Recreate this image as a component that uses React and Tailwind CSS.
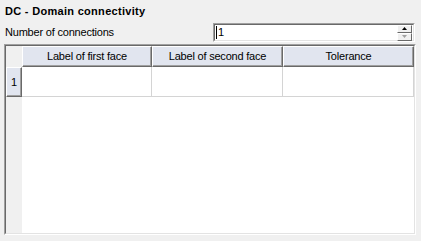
export default function App() {
	const cols = [
		{ label: 'Label of first face', w: 'w-[130px]' },
		{ label: 'Label of second face', w: 'w-[131px]' },
		{ label: 'Tolerance', w: 'w-[131px]' },
	];

	return (
		<div className="h-[241px] w-[421px] overflow-hidden bg-[#f0f0f0] pl-[4px] pt-[4px] font-['Liberation_Sans',Arial,sans-serif] text-[11px] tracking-[-0.2px] text-black">
			<div className="h-[14px] pl-[1px] font-bold leading-[14px] tracking-[0.3px]">DC - Domain connectivity</div>

			<div className="mt-[5px] flex h-[19px] w-[411px] items-center justify-between">
				<span className="pl-[1px]">Number of connections</span>
				<div className="h-[19px] w-[202px] border border-t-[#a0a0a0] border-l-[#a0a0a0] border-b-white border-r-white">
					<div className="flex h-full w-full items-center border border-t-[#696969] border-l-[#696969] border-b-[#e3e3e3] border-r-[#e3e3e3] bg-white">
						<div className="ml-[1px] h-[13px] w-px bg-black" />
						<span className="ml-[1px] flex-1 leading-[13px]">1</span>
						<div className="mr-px flex flex-col">
							<SpinButton up />
							<SpinButton />
						</div>
					</div>
				</div>
			</div>

			<div className="mt-[2px] h-[191px] w-[412px] border border-t-[#a0a0a0] border-l-[#a0a0a0] border-b-white border-r-white">
				<div className="flex h-full w-full flex-col border border-t-[#696969] border-l-[#696969] border-b-[#e3e3e3] border-r-[#e3e3e3] bg-white">
					<div className="flex h-[21px] shrink-0">
						<div className="w-[16px] bg-[#f0f0f0]" />
						{cols.map((c) => (
							<div
								key={c.label}
								className={`${c.w} flex items-center justify-center border-t border-l border-t-white border-l-white border-r border-b border-r-[#696969] border-b-[#696969] bg-[#e1e5ef] shadow-[inset_-1px_-1px_0_#a0a0a0]`}
							>
								{c.label}
							</div>
						))}
					</div>
					<div className="flex h-[30px] shrink-0">
						<div className="flex w-[16px] items-center justify-center border-t border-l border-t-white border-l-white border-r border-b border-r-[#696969] border-b-[#696969] bg-[#e1e5ef] shadow-[inset_-1px_-1px_0_#a0a0a0]">
							1
						</div>
						{cols.map((c) => (
							<div key={c.label} className={`${c.w} border-r border-b border-[#d4d4d4]`} />
						))}
					</div>
					<div className="flex flex-1">
						<div className="w-[16px] bg-[#f0f0f0]" />
						<div className="flex-1 bg-white" />
					</div>
				</div>
			</div>
		</div>
	);
}

function SpinButton({ up }) {
	return (
		<div className="flex h-[8px] w-[15px] items-center justify-center border border-t-white border-l-white border-r-[#696969] border-b-[#696969] bg-[#f0f0f0]">
			<svg width="5" height="3" viewBox="0 0 5 3">
				{up ? <path d="M2.5 0 L5 3 L0 3 Z" fill="#000" /> : <path d="M0 0 L5 0 L2.5 3 Z" fill="#a0a0a0" />}
			</svg>
		</div>
	);
}
